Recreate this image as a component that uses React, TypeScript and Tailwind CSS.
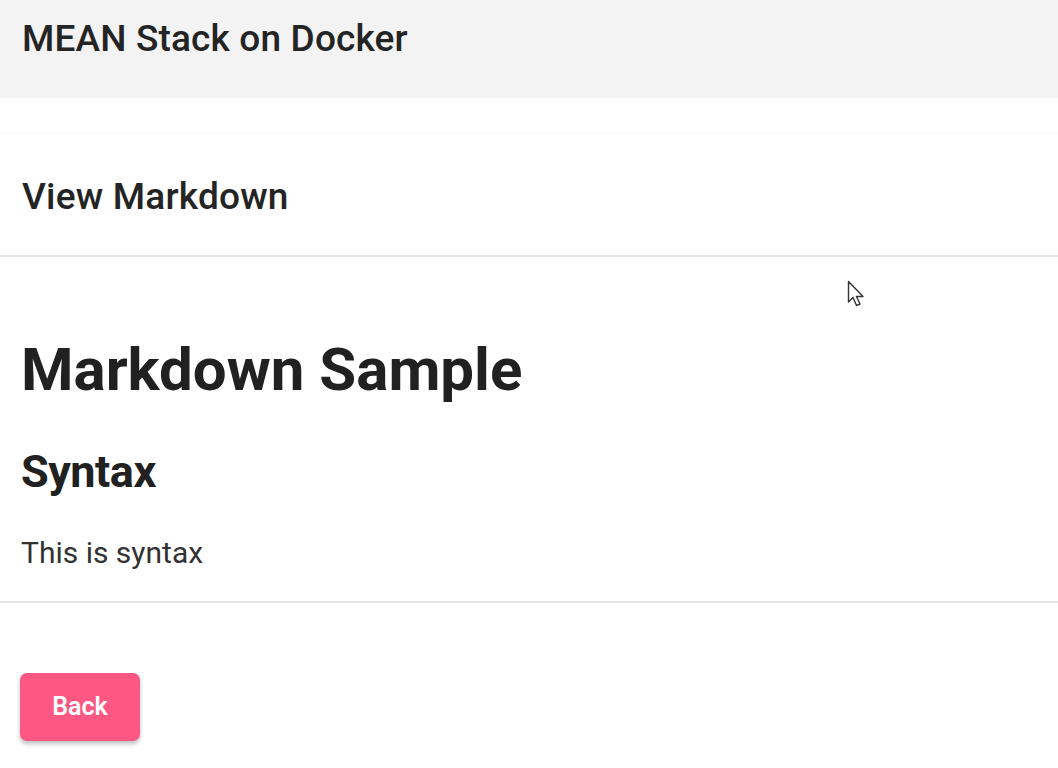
export default function App() {
  return (
    <div className="relative min-h-[768px] bg-white font-['Roboto',sans-serif] text-[#212121]">
      {/* Toolbar */}
      <header className="flex h-[98px] items-start bg-[#f3f3f3] px-[22px] pt-[15px]">
        <h1 className="text-[37px] leading-[48px] font-medium tracking-[0.15px] text-[#242424]">MEAN Stack on Docker</h1>
      </header>

      {/* Card */}
      <div className="mt-[34px] border-t border-[#f7f7fb]">
        <div className="flex h-[124px] items-center border-b-2 border-[#e6e6e6] px-[22px] pt-[5px]">
          <h2 className="text-[37px] font-medium tracking-[0.2px] text-[#242424]">View Markdown</h2>
        </div>

        <div className="border-b-2 border-[#e6e6e6] px-[21px] pt-[77px] pb-[28px]">
          <h1 className="text-[60px] leading-[72px] font-bold text-[#212121]">Markdown Sample</h1>
          <h2 className="mt-[40px] text-[45px] leading-[52px] font-bold tracking-[-0.5px] text-[#212121]">Syntax</h2>
          <p className="mt-[35px] text-[30px] leading-[40px] text-[#333]">This is syntax</p>
        </div>

        <div className="px-[20px] pt-[70px]">
          <button className="h-[68px] w-[120px] rounded-[7px] bg-[#ff5784] text-[25px] font-semibold text-white shadow-[0_3px_4px_rgba(0,0,0,0.25)]">
            Back
          </button>
        </div>
      </div>

      {/* Mouse pointer */}
      <svg className="absolute left-[847px] top-[280px]" width="20" height="30" viewBox="0 0 20 30">
        <path d="M1.5 1.5 L1.5 22 L6 17.5 L9.5 25.5 L13 24 L9.5 16.5 L16 16.5 Z" fill="#fff" stroke="#333" strokeWidth="1.4" strokeLinejoin="round" />
      </svg>
    </div>
  );
}
